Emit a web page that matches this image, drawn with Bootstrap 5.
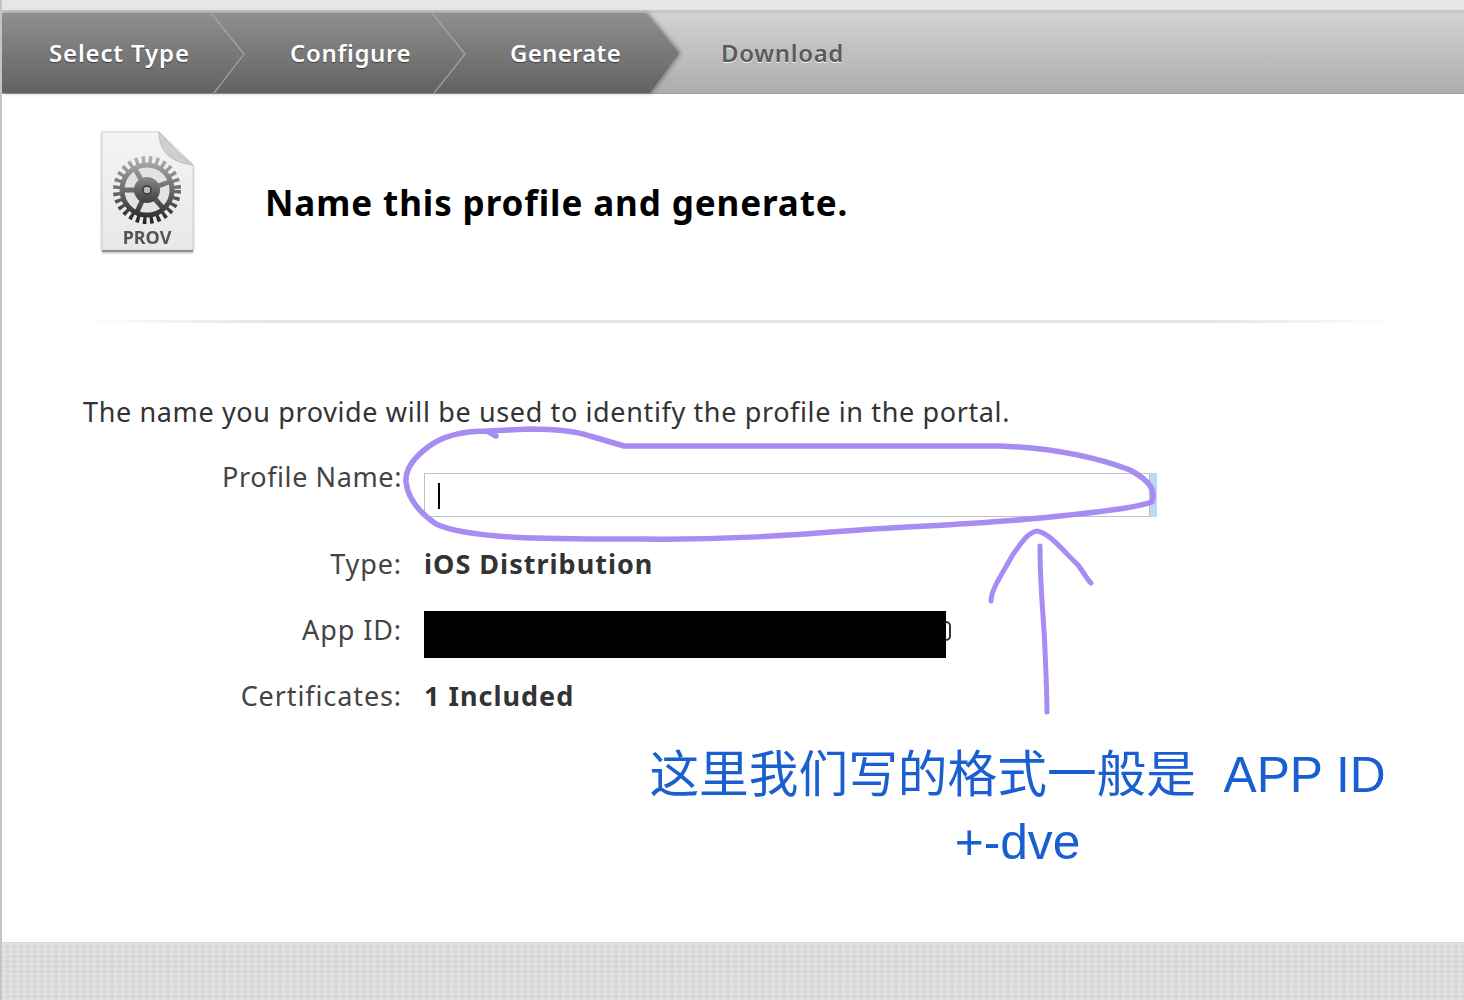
<!DOCTYPE html>
<html lang="en">
<head>
<meta charset="utf-8">
<title>Name this profile</title>
<link href="https://cdn.jsdelivr.net/npm/bootstrap@5.3.0/dist/css/bootstrap.min.css" rel="stylesheet">
<style>
html,body{height:1000px;overflow:hidden}
body{background:#fff;font-family:"Noto Sans","Open Sans",sans-serif;color:#333;border-left:2px solid #c4c4c4;position:relative}
.top-strip{height:10px;background:#e6e6e6}
.top-rule{height:3px;background:#c9c9c9}
.wizard{height:81px;background:linear-gradient(#d2d2d2,#adadad);border-bottom:1px solid #a0a0a0;position:relative}
.wizard-shade{position:absolute;left:0;top:0;bottom:0;width:677px;filter:drop-shadow(2px 0 2px rgba(0,0,0,.35))}
.wizard-done{height:100%;background:linear-gradient(#8f8f8f,#626262);clip-path:polygon(0 0,644px 0,677px 50%,648px 100%,0 100%)}
.wizard-lines{position:absolute;left:0;top:0;width:677px;height:80px}
.wizard-steps{position:relative;height:80px}
.step-item{font-size:24px;font-weight:600;color:#fff;text-shadow:0 1px 1px rgba(0,0,0,.45);line-height:80px;position:relative;white-space:nowrap;letter-spacing:.65px}
.step-a{width:241px;padding-left:47px;letter-spacing:.85px}
.step-b{width:221px;padding-left:47px}
.step-c{width:211px;padding-left:46px;letter-spacing:.3px}
.step-d{color:#5a5a5a;text-shadow:0 1px 0 rgba(255,255,255,.85);padding-left:46px}
.hero{height:226px;padding-left:97px}
.prov-icon{width:96px;height:124px;margin-top:36px;flex:none;filter:drop-shadow(0 1px 1px rgba(0,0,0,.3))}
.hero-title{font-size:35px;font-weight:700;color:#000;margin:0 0 0 70px;padding-top:85px;line-height:48px;white-space:nowrap;letter-spacing:.9px}
.fade-rule{height:3px;margin-left:78px;width:1320px;background:linear-gradient(90deg,rgba(225,225,225,0),#e4e4e4 15%,#e4e4e4 85%,rgba(225,225,225,0))}
.intro{font-size:27px;line-height:38px;margin:70px 0 0 81px;color:#333;white-space:nowrap;letter-spacing:.63px}
.field-row{display:flex;align-items:center;font-size:27px;color:#444;letter-spacing:.9px}
.field-label{width:400px;text-align:right;flex:none;line-height:38px}
.field-value{margin-left:22px;font-weight:700;color:#333;letter-spacing:1px}
.row-name{height:44px;margin-top:42px}
.row-name .field-label{align-self:flex-start;margin-top:-15px;letter-spacing:.6px}
.row-type{height:40px;margin-top:27px}
.row-app{height:47px;margin-top:27px}
.row-app .field-label{align-self:flex-start}
.row-cert{height:40px;margin-top:18px}
.name-input{width:726px;height:44px;border:1px solid #b9c4cc;background:#fff;position:relative;margin-left:22px;box-shadow:7px 0 0 #bcd9f7}
.caret-bar{position:absolute;left:13px;top:9px;width:2px;height:26px;background:#000}
.redact{width:522px;height:47px;background:#000;margin-left:22px}
.redact-end{width:5px;height:20px;border:2px solid #333;border-left:0;border-radius:0 10px 10px 0;align-self:flex-start;margin-top:10px}
.page-foot{position:absolute;left:0;right:0;top:942px;height:58px;background-color:#dcdcdc;background-image:repeating-linear-gradient(90deg,rgba(255,255,255,.12) 0 3px,rgba(0,0,0,.012) 3px 7px),repeating-linear-gradient(0deg,rgba(255,255,255,.1) 0 2px,rgba(0,0,0,.015) 2px 5px)}
.scribble{position:absolute;left:-2px;top:0;width:1464px;height:1000px;pointer-events:none}
.note{position:absolute;left:638px;top:742px;width:755px;text-align:center;color:#1a5fd2;font-family:"Liberation Sans","Noto Sans CJK SC",sans-serif;font-size:49.7px;line-height:67px;white-space:pre}
</style>
</head>
<body>
<div class="top-strip"></div>
<div class="top-rule"></div>
<div class="wizard">
  <div class="wizard-shade"><div class="wizard-done"></div></div>
  <svg class="wizard-lines" viewBox="0 0 677 80"><path d="M209 0 242 41 212 80M430 0 463 41 432 80" fill="none" stroke="#a8a8a8" stroke-width="1.2"/></svg>
  <div class="wizard-steps d-flex">
    <div class="step-item step-a">Select Type</div>
    <div class="step-item step-b">Configure</div>
    <div class="step-item step-c">Generate</div>
    <div class="step-item step-d">Download</div>
  </div>
</div>
<div class="hero d-flex">
  <svg class="prov-icon" viewBox="0 0 96 124">
    <defs><linearGradient id="pg" x1="0" y1="0" x2="0" y2="1"><stop offset="0" stop-color="#f4f4f4"/><stop offset="1" stop-color="#e8e8e8"/></linearGradient>
    <linearGradient id="gg" gradientUnits="userSpaceOnUse" x1="0" y1="26" x2="0" y2="94"><stop offset="0" stop-color="#b4b4b4"/><stop offset="1" stop-color="#222"/></linearGradient>
    <linearGradient id="hg" x1="0" y1="0" x2="0" y2="1"><stop offset="0" stop-color="#8a8a8a"/><stop offset="1" stop-color="#3e3e3e"/></linearGradient></defs>
    <path d="M3 2H60L94 35V120H3Z" fill="url(#pg)" stroke="#d4d4d4"/>
    <path d="M3 121H94" stroke="#8f8f8f" stroke-width="2"/>
    <path d="M60 2C60 20 70 32 94 35 80 24 70 13 60 2Z" fill="#cfcfcf" stroke="#bbb"/>
    <circle cx="48" cy="60" r="30" fill="none" stroke="url(#gg)" stroke-width="8" stroke-dasharray="3.4 3.4"/>
    <circle cx="48" cy="60" r="25" fill="none" stroke="url(#gg)" stroke-width="5"/>
    <circle cx="48" cy="60" r="22" fill="#e2e2e2"/>
    <g stroke="url(#gg)" stroke-width="5">
      <path d="M48 60 36 39"/><path d="M48 60 70 52"/><path d="M48 60 64 78"/><path d="M48 60 38 82"/><path d="M48 60 25 60"/>
    </g>
    <circle cx="48" cy="60" r="13" fill="url(#hg)"/>
    <circle cx="48" cy="60" r="4" fill="#bbb" stroke="#333" stroke-width="1.5"/>
    <text x="48" y="114" text-anchor="middle" font-family="Noto Sans, sans-serif" font-size="18" font-weight="700" fill="#555">PROV</text>
  </svg>
  <h1 class="hero-title">Name this profile and generate.</h1>
</div>
<div class="fade-rule"></div>
<p class="intro">The name you provide will be used to identify the profile in the portal.</p>
<div class="field-row row-name"><div class="field-label">Profile Name:</div><div class="name-input"><div class="caret-bar"></div></div></div>
<div class="field-row row-type"><div class="field-label">Type:</div><div class="field-value">iOS Distribution</div></div>
<div class="field-row row-app"><div class="field-label">App ID:</div><div class="redact"></div><div class="redact-end"></div></div>
<div class="field-row row-cert"><div class="field-label">Certificates:</div><div class="field-value">1 Included</div></div>
<div class="page-foot"></div>
<svg class="scribble" viewBox="0 0 1464 1000" fill="none" stroke="#a78cf2" stroke-linecap="round" stroke-linejoin="round">
  <path stroke-width="5.5" d="M496 436 487 431C470 431 445 434 428 447 412 459 405 470 406 482 408 500 420 513 436 524 470 540 560 539 640 539 720 540 780 536 860 530 920 526 1000 523 1060 516 1100 512 1135 508 1152 502 1156 490 1150 481 1130 470 1090 455 1050 448 1000 446H624L590 436C575 431 555 429 530 429L487 431"/>
  <path stroke-width="5" d="M991 601C991 590 1000 578 1012 556 1024 538 1030 532 1037 531 1050 533 1064 552 1077 564 1084 572 1087 580 1091 583"/>
  <path stroke-width="5" d="M1040 546C1040 590 1044 620 1045 650 1046 675 1047 695 1047 712"/>
</svg>
<div class="note">这里我们写的格式一般是  APP ID
+-dve</div>
<script src="https://cdn.jsdelivr.net/npm/bootstrap@5.3.0/dist/js/bootstrap.bundle.min.js"></script>
</body>
</html>
